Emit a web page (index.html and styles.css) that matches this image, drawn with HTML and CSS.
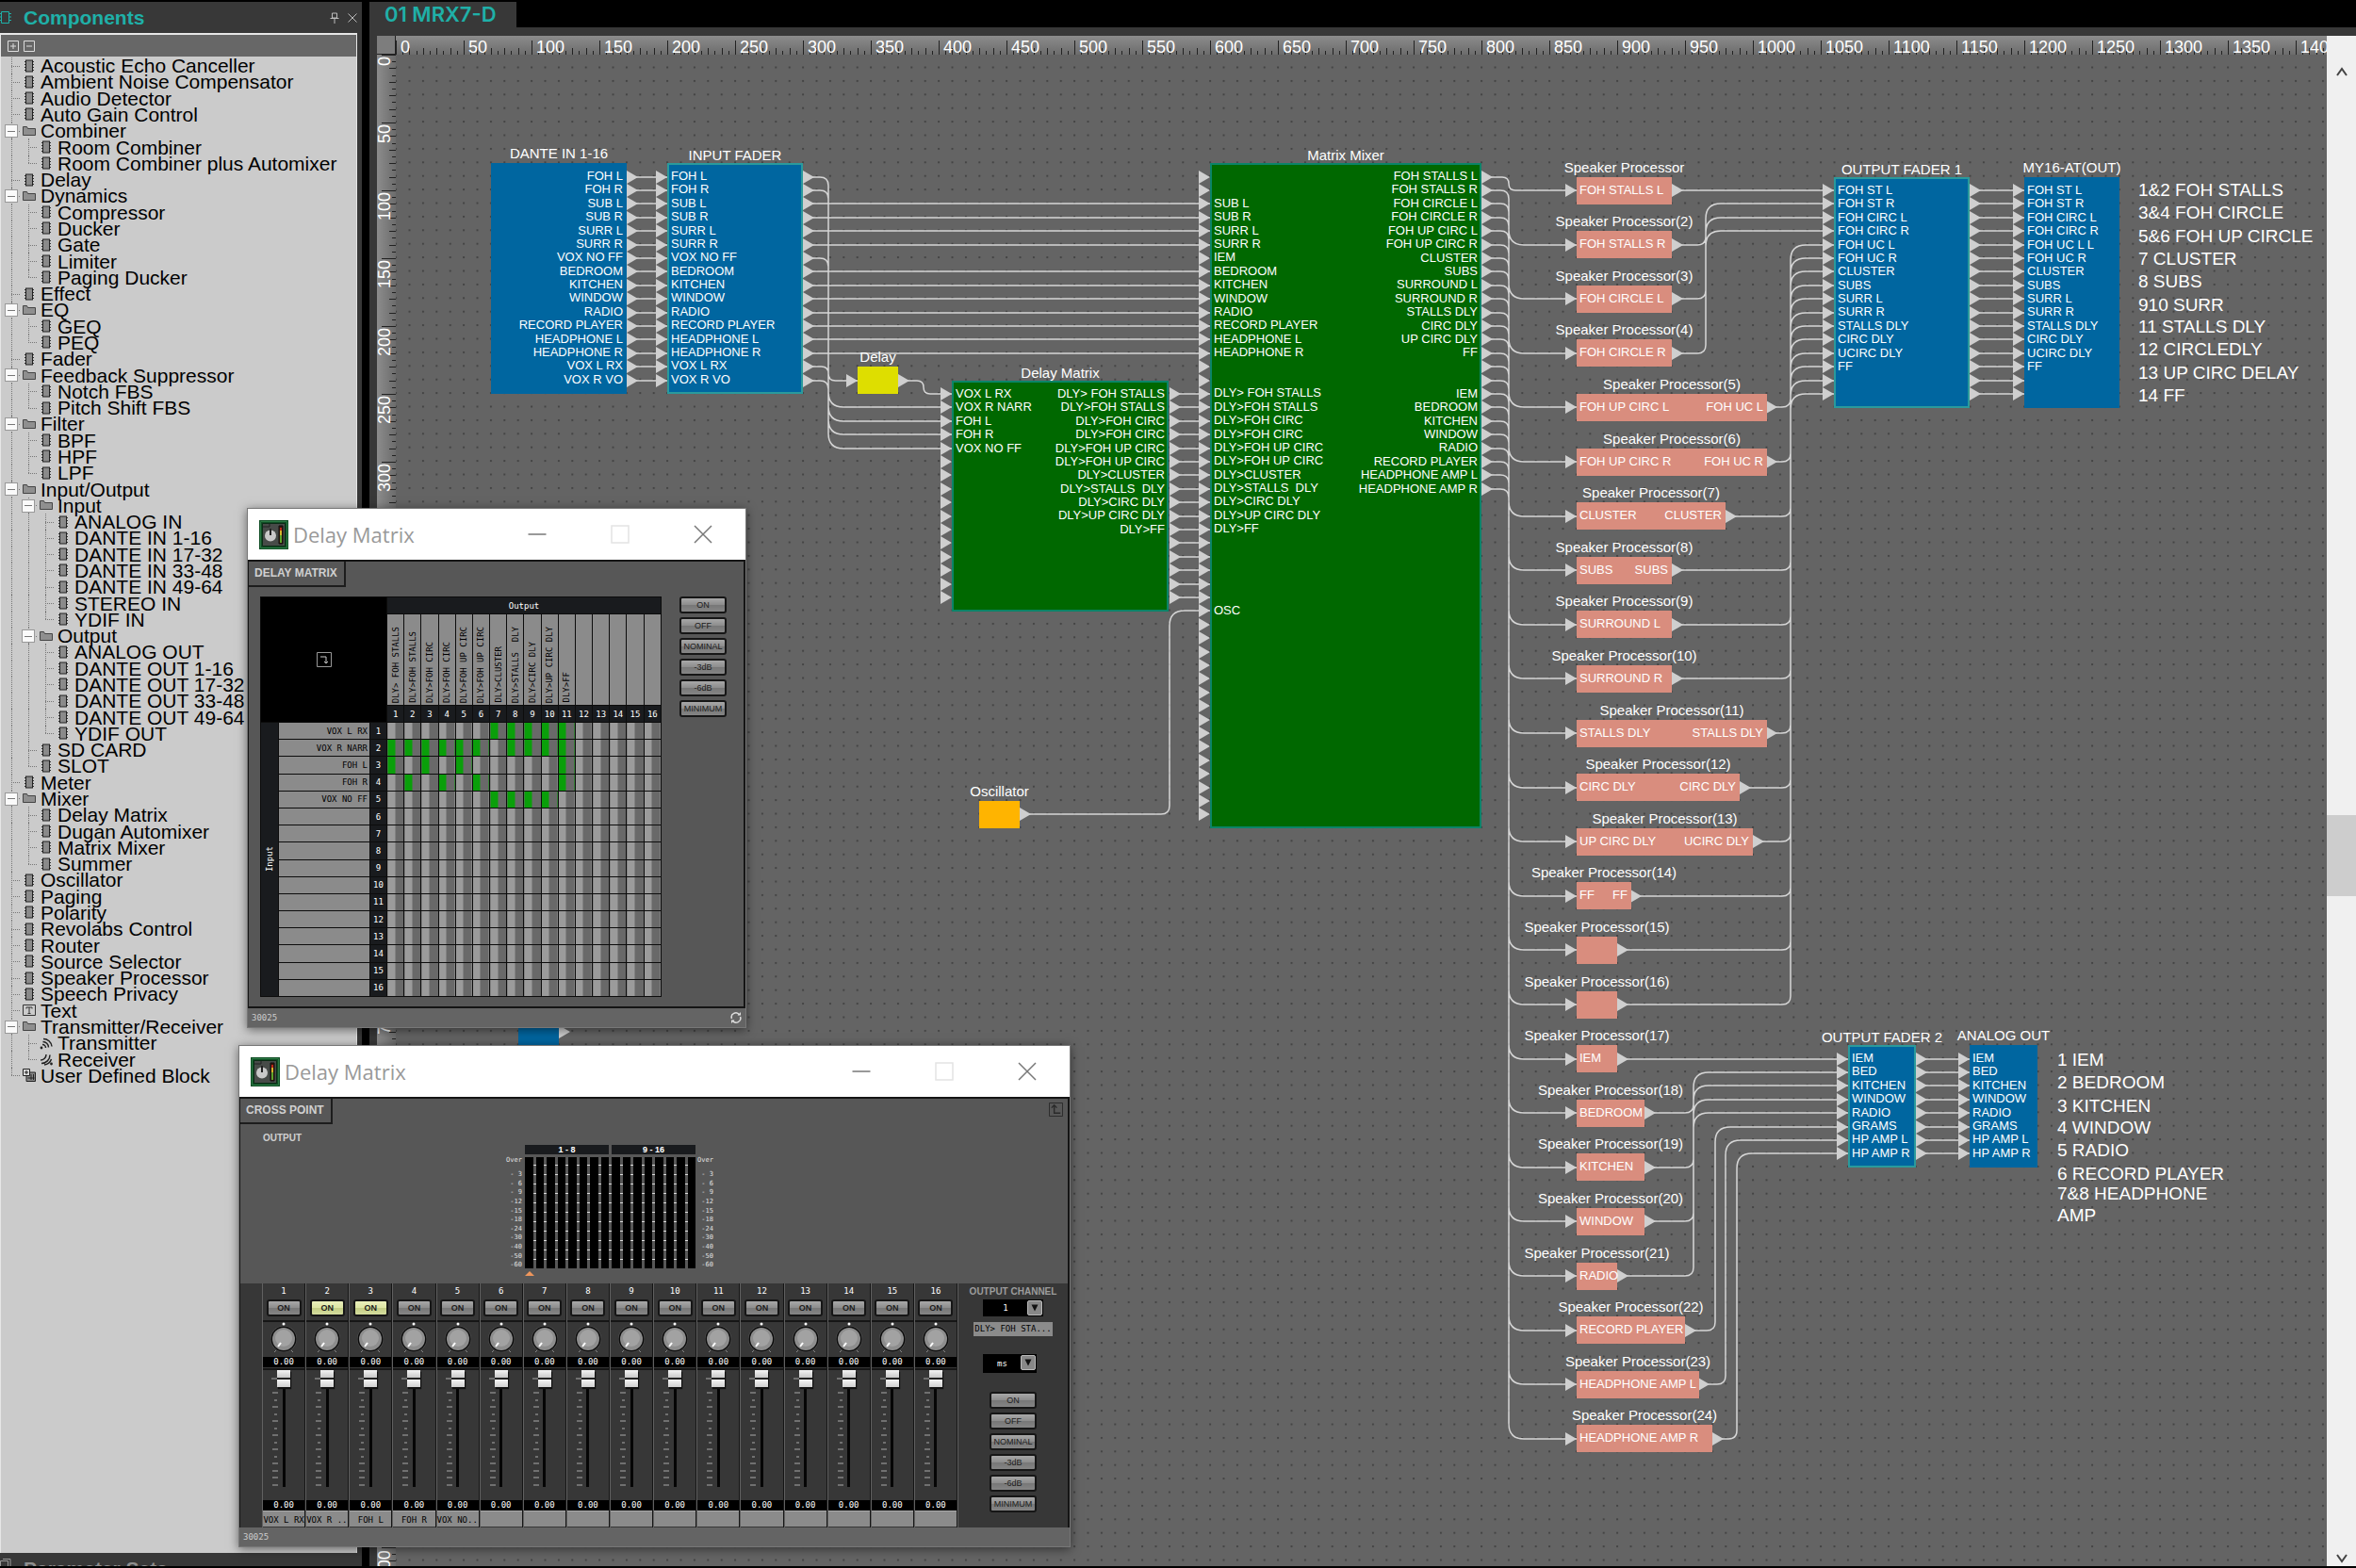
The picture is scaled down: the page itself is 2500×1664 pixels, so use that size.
FILE: index.html
```html
<!DOCTYPE html>
<html lang="en">

<head>
	<meta charset="UTF-8">
	<meta name="viewport" content="width=device-width, initial-scale=1.0">
	<title>01 MRX7-D</title>
	<link rel="stylesheet" href="styles.css">
</head>

<body>
	<!-- shared icons -->
	<svg class="defs" aria-hidden="true">
		<symbol id="i-chip" viewBox="0 0 14 14">
			<path d="M2 2.5h10M2 5.5h10M2 8.5h10M2 11.5h10" stroke="#333" />
			<rect x="3.5" y="1" width="7" height="12" fill="#8a8a8a" stroke="#222" />
		</symbol>
		<symbol id="i-folder" viewBox="0 0 14 14">
			<path d="M.5 11.5v-9h4l1 2h8v7z" fill="#8f8f8f" stroke="#444" />
		</symbol>
		<symbol id="i-text" viewBox="0 0 14 14">
			<path d="M.5 1.5h13v11H.5z" fill="none" stroke="#333" />
			<path d="M4 5.5V4h6v1.5M7 4v6M5.5 10.5h3" fill="none" stroke="#333" />
		</symbol>
		<symbol id="i-send" viewBox="0 0 14 14">
			<circle cx="2" cy="12" r="1.4" fill="#222" />
			<path d="M3 8.5a3.5 3.5 0 0 1 3.5 3.5M3.5 5.5a6 6 0 0 1 6 6M4 2.5a9 9 0 0 1 9 8" fill="none" stroke="#222" stroke-width="1.5" />
		</symbol>
		<symbol id="i-receive" viewBox="0 0 14 14">
			<circle cx="12.5" cy="12" r="1.4" fill="#222" />
			<path d="M2 11.5a9 9 0 0 0 9-9M1 8a6 6 0 0 0 6-6M5 13a9 9 0 0 0 7.5-6" fill="none" stroke="#222" stroke-width="1.5" />
		</symbol>
		<symbol id="i-user" viewBox="0 0 14 14">
			<path d="M4 4h9.5v9.5H4z" fill="#888" stroke="#222" />
			<path d="M.5.5h7v7h-7z" fill="#ddd" stroke="#222" />
			<path d="M2 4h4M4 2v4M9 6v6M11.5 6v6M5.5 10h7" stroke="#222" />
		</symbol>
		<symbol id="i-app" viewBox="0 0 31 31">
			<path d="M0 0h31v31H0z" fill="#0f4d24" />
			<path d="M1.5 1.5h28v28h-28z" fill="none" stroke="#2d7a45" />
			<path d="M3.5 3.5h24v24h-24z" fill="#474b48" stroke="#0b2b15" />
			<path d="M4 7h7V4" fill="none" stroke="#222" />
			<circle cx="12" cy="16.5" r="6" fill="#c9c9c9" />
			<path d="M12 9v7" stroke="#222" stroke-width="2" />
			<path d="M21 6h4v19h-4z" fill="#3b1508" stroke="#111" />
			<path d="M22 13h2v11h-2z" fill="#5da52c" />
			<path d="M22 11h2v5h-2z" fill="#d5b52b" />
			<path d="M22 8h2v3h-2z" fill="#bb2a1c" />
		</symbol>
		<symbol id="i-min" viewBox="0 0 20 20">
			<path d="M.5 10h19" stroke="#777" stroke-width="1.5" />
		</symbol>
		<symbol id="i-max" viewBox="0 0 20 20">
			<path d="M1 1h18v18H1z" fill="none" stroke="#e4e4e4" stroke-width="1.5" />
		</symbol>
		<symbol id="i-close" viewBox="0 0 20 20">
			<path d="M1 1l18 18M19 1L1 19" stroke="#777" stroke-width="1.5" />
		</symbol>
	</svg>

	<div class="app">
		<aside class="sidebar">
			<section class="panel">
				<header class="panel-head">
					<svg class="head-icon" viewBox="0 0 12 14"><path d="M0 2.5h12M0 6h12M0 9.5h12" stroke="#1fb0a8" /><path d="M1.5.5h8v12h-8z" fill="#383838" stroke="#1fb0a8" /></svg>
					<h1>Components</h1>
					<button class="icon-btn" aria-label="Pin"><svg viewBox="0 0 10 12"><path d="M2.5 1h5v5h-5zM.5 6.5h9M5 7v5" fill="none" stroke="#bbb" /></svg></button>
					<button class="icon-btn" aria-label="Close"><svg viewBox="0 0 10 10"><path d="M.5.5l9 9M9.5.5l-9 9" stroke="#bbb" /></svg></button>
				</header>
				<div class="tree-box">
					<div class="tree-tools">
						<button aria-label="Expand all"><svg viewBox="0 0 12 12"><path d="M.5.5h11v11H.5zM3 6h6M6 3v6" fill="none" stroke="#ddd" /></svg></button>
						<button aria-label="Collapse all"><svg viewBox="0 0 12 12"><path d="M.5.5h11v11H.5zM3 6h6" fill="none" stroke="#ddd" /></svg></button>
					</div>
					<ul class="tree" id="tree"></ul>
				</div>
			</section>
			<section class="panel-closed">
				<svg class="head-icon" viewBox="0 0 12 14"><path d="M.5 2.5h8v10h-8zM3 .5h8v10" fill="none" stroke="#999" /></svg>
				<h2>Parameter Sets</h2>
			</section>
		</aside>

		<main class="editor">
			<nav class="tabs"><a href="#">01 MRX7-D</a></nav>
			<div class="corner"></div>
			<svg class="ruler ruler-x" id="rulerX"></svg>
			<svg class="ruler ruler-y" id="rulerY"></svg>
			<div class="canvas" id="canvas">
				<svg class="layer">
					<defs>
						<pattern id="dots" width="10" height="10" patternUnits="userSpaceOnUse" patternTransform="translate(2 1) scale(1.44)">
							<path d="M8 8h1.4v1.4H8z" fill="#444" />
						</pattern>
					</defs>
					<rect width="100%" height="100%" fill="url(#dots)" />
				</svg>
				<svg class="layer" id="wires"></svg>
			</div>
			<div class="scrollbar">
				<svg viewBox="0 0 12 10"><path d="M1 9l5-7 5 7" fill="none" stroke="#444" stroke-width="2" /></svg>
				<div class="thumb"></div>
				<svg viewBox="0 0 12 10"><path d="M1 1l5 7 5-7" fill="none" stroke="#444" stroke-width="2" /></svg>
			</div>
		</main>
	</div>

	<section class="window matrix-window">
		<header class="titlebar">
			<svg class="app-icon"><use href="#i-app" /></svg>
			<h2>Delay Matrix</h2>
			<button aria-label="Minimize"><svg><use href="#i-min" /></svg></button>
			<button aria-label="Maximize"><svg><use href="#i-max" /></svg></button>
			<button aria-label="Close"><svg><use href="#i-close" /></svg></button>
		</header>
		<div class="window-body">
			<h3 class="sheet-tab">DELAY MATRIX</h3>
			<div class="matrix-row">
				<table class="matrix" id="matrix">
					<colgroup>
						<col class="col-side">
						<col class="col-name">
						<col class="col-num">
						<col span="16">
					</colgroup>
				</table>
				<div class="presets">
					<button>ON</button>
					<button>OFF</button>
					<button>NOMINAL</button>
					<button>-3dB</button>
					<button>-6dB</button>
					<button>MINIMUM</button>
				</div>
			</div>
		</div>
		<footer class="statusbar">
			<span>30025</span>
			<svg viewBox="0 0 12 12"><path d="M1.5 7a4.5 4.5 0 0 1 8-4M10.5 5a4.5 4.5 0 0 1-8 4" fill="none" stroke="#ddd" stroke-width="1.5" /><path d="M7.5 3.5h3.5V0zM4.5 8.5H1V12z" fill="#ddd" /></svg>
		</footer>
	</section>

	<section class="window cross-window">
		<header class="titlebar">
			<svg class="app-icon"><use href="#i-app" /></svg>
			<h2>Delay Matrix</h2>
			<button aria-label="Minimize"><svg><use href="#i-min" /></svg></button>
			<button aria-label="Maximize"><svg><use href="#i-max" /></svg></button>
			<button aria-label="Close"><svg><use href="#i-close" /></svg></button>
		</header>
		<div class="window-body">
			<div class="cross-top">
				<h3 class="sheet-tab">CROSS POINT</h3>
				<button class="back" aria-label="Back"><svg viewBox="0 0 16 16"><path d="M.5.5h15v15H.5z" fill="none" stroke="#2a2a2a" /><path d="M6 4v8h7M3 6l3-3 3 3" fill="none" stroke="#2a2a2a" stroke-width="1.5" /></svg></button>
			</div>
			<div class="meter-area">
				<span class="meter-title">OUTPUT</span>
				<ul class="scale" id="scaleL"></ul>
				<div class="meters">
					<div class="banks"><span>1 - 8</span><span>9 - 16</span></div>
					<div class="bars" id="bars"></div>
					<i class="marker"></i>
				</div>
				<ul class="scale" id="scaleR"></ul>
			</div>
			<div class="mixer">
				<div class="strips" id="strips"></div>
				<div class="master">
					<label class="master-title" for="channel">OUTPUT CHANNEL</label>
					<div class="drop">
						<select id="channel"><option>1</option></select>
						<svg viewBox="0 0 16 16"><path d="M4 4h8l-4 8z" fill="#111" /></svg>
					</div>
					<span class="master-name">DLY&gt; FOH STA...</span>
					<div class="drop drop-unit">
						<select aria-label="Unit"><option>ms</option></select>
						<svg viewBox="0 0 16 16"><path d="M4 4h8l-4 8z" fill="#111" /></svg>
					</div>
					<div class="presets">
						<button>ON</button>
						<button>OFF</button>
						<button>NOMINAL</button>
						<button>-3dB</button>
						<button>-6dB</button>
						<button>MINIMUM</button>
					</div>
				</div>
			</div>
		</div>
		<footer class="statusbar">
			<span>30025</span>
		</footer>
	</section>

	<script src="script.js"></script>
</body>

</html>
```
FILE: styles.css
```css
* {
	margin: 0;
	padding: 0;
	box-sizing: border-box;
}

body {
	height: 100vh;
	overflow: hidden;
	background: #000;
	color: #fff;
	font-family: "Liberation Sans", Arial, sans-serif;
}

ul {
	list-style: none;
}

button {
	border: 0;
	background: none;
	font-family: inherit;
}

svg {
	display: block;
}

.defs {
	display: none;
}

/* page frame */
.app {
	display: grid;
	grid-template-columns: 384px 1fr;
	column-gap: 8px;
	height: 100vh;
	padding: 2px 0;
}

.sidebar {
	display: flex;
	flex-direction: column;
	min-height: 0;
	background: #383838;
}

.panel {
	flex: 1;
	display: flex;
	flex-direction: column;
	min-height: 0;
	padding-right: 5px;
}

.panel-head {
	display: flex;
	align-items: center;
	height: 33px;
	flex: none;
}

.head-icon {
	width: 12px;
	height: 14px;
	margin-right: 13px;
}

.panel-head h1 {
	flex: 1;
	color: #1fb0a8;
	font-size: 21px;
	line-height: 28px;
}

.icon-btn {
	width: 10px;
	height: 12px;
	margin-left: 9px;
}

.tree-box {
	flex: 1;
	min-height: 0;
	background: #cbcbcb;
	border: 1px solid #e6e6e6;
	border-width: 2px 1px 0 1px;
}

.tree-tools {
	display: flex;
	align-items: center;
	gap: 5px;
	height: 23px;
	padding-left: 7px;
	background: #676767;
}

.tree-tools button {
	width: 12px;
	height: 12px;
}

.tree {
	display: grid;
	grid-auto-rows: 1fr;
	height: 1089px;
	margin-top: 1px;
	padding-left: 2px;
	color: #000;
	font-size: 21px;
	line-height: 17px;
}

.tree li {
	display: flex;
	align-items: center;
	min-height: 0;
	white-space: nowrap;
}

.guide {
	position: relative;
	flex: none;
	align-self: stretch;
	width: 18px;
}

/* vertical and horizontal dotted guides */
.guide.line::before,
.guide.end::before {
	content: "";
	position: absolute;
	left: 9px;
	top: 0;
	bottom: 0;
	border-left: 1px dotted #777;
}

.guide.end::before {
	bottom: 50%;
}

.guide.tick::after {
	content: "";
	position: absolute;
	left: 9px;
	right: 0;
	top: 50%;
	border-top: 1px dotted #777;
}

.guide button {
	position: absolute;
	z-index: 1;
	left: 2px;
	top: 2px;
	width: 14px;
	height: 14px;
	border: 1px solid #999;
	background: linear-gradient(#777, #777) center / 8px 1px no-repeat #fafafa;
}

.tree li svg {
	flex: none;
	width: 14px;
	height: 14px;
	margin: 0 5px 0 3px;
}

.panel-closed {
	display: flex;
	height: 14px;
	padding-top: 6px;
	overflow: hidden;
	color: #8f8f8f;
}

.panel-closed h2 {
	font-size: 21px;
	line-height: 21px;
}

/* editor */
.editor {
	display: grid;
	grid-template: 27px 29px 1fr / 28px 1fr 31px;
	min-width: 0;
	min-height: 0;
	background: #383838;
}

.tabs {
	grid-column: 1 / -1;
	background: #000;
}

.tabs a {
	display: block;
	width: 156px;
	height: 27px;
	padding-left: 16px;
	background: #383838;
	color: #1fb0a8;
	font-family: Inter, "Open Sans", sans-serif;
	font-size: 22px;
	line-height: 27px;
	font-weight: 600;
	text-decoration: none;
}

.corner {
	width: 20px;
	height: 20px;
	margin: 9px 0 0 8px;
	background: #7d7d7d;
	border-right: 1px solid #222;
	border-bottom: 1px solid #222;
}

.ruler {
	overflow: hidden;
	fill: #fff;
	font-size: 18px;
}

.ruler path {
	stroke: #222;
	fill: none;
}

.ruler-x {
	width: 100%;
	height: 20px;
	margin-top: 9px;
	background: linear-gradient(#8c8c8c, #6c6c6c);
}

.ruler-y {
	grid-row: 3;
	width: 20px;
	height: 100%;
	margin-left: 8px;
	background: linear-gradient(to right, #8c8c8c, #6c6c6c);
}

.canvas {
	position: relative;
	grid-row: 3;
	grid-column: 2;
	overflow: hidden;
	background: #646464;
}

.layer {
	position: absolute;
	inset: 0;
	width: 100%;
	height: 100%;
}

.wire {
	fill: none;
	stroke: #d6d6d6;
	stroke-width: 1.5;
}

.port {
	fill: #cfcfcf;
}

.block {
	position: absolute;
	display: flex;
	justify-content: space-between;
	padding: 7px 4px 0 3px;
	background: #0066a0;
	font-size: 13px;
	line-height: 14px;
}

.block.framed {
	border: 2px solid #2a9a9c;
	padding: 5px 2px 0 2px;
}

.block.green {
	background: #006800;
	border: 2px solid #0b8468;
	padding: 5px 2px 0 2px;
}

.block.yellow {
	background: #dede00;
}

.block.orange {
	background: #ffb400;
}

.block.speaker {
	background: #d98d7e;
}

.block h4 {
	position: absolute;
	bottom: 100%;
	left: -100px;
	right: -100px;
	font-size: 15px;
	line-height: 20px;
	font-weight: 400;
	text-align: center;
}

.block ul {
	display: grid;
	grid-auto-rows: 1fr;
	min-width: 0;
}

.block li {
	white-space: pre;
}

.block .outs {
	text-align: right;
}

.note {
	position: absolute;
	font-size: 19px;
	line-height: 24px;
	white-space: nowrap;
}

.scrollbar {
	grid-row: 2 / 4;
	grid-column: 3;
	display: flex;
	flex-direction: column;
	align-items: center;
	margin-top: 9px;
	padding: 33px 0 3px 0;
	background: #f0f0f0;
}

.scrollbar svg {
	width: 12px;
	height: 10px;
}

.scrollbar .thumb {
	flex: none;
	width: 100%;
	height: 86px;
	margin: 784px 0 auto;
	background: #cdcdcd;
}

/* floating windows */
.window {
	position: absolute;
	display: flex;
	flex-direction: column;
	background: #646464;
	border: 1px solid #777;
	box-shadow: 0 2px 10px rgba(0, 0, 0, 0.5);
}

.matrix-window {
	left: 262px;
	top: 539px;
	width: 530px;
	height: 552px;
}

.cross-window {
	left: 253px;
	top: 1109px;
	width: 883px;
	height: 533px;
}

.titlebar {
	display: flex;
	align-items: center;
	flex: none;
	height: 54px;
	padding: 0 35px 0 12px;
	background: #fff;
}

.app-icon {
	width: 31px;
	height: 31px;
}

.titlebar h2 {
	flex: 1;
	margin-left: 5px;
	color: #999;
	font-family: "Open Sans", "Noto Sans", sans-serif;
	font-size: 22px;
	line-height: 30px;
	font-weight: 400;
}

.titlebar button {
	width: 20px;
	height: 20px;
	margin-left: 68px;
}

.titlebar button svg {
	width: 20px;
	height: 20px;
}

.window-body {
	flex: 1;
	min-height: 0;
	background: #575757;
	border: 1px solid #151515;
	border-width: 2px 2px 2px 1px;
}

.sheet-tab {
	width: max-content;
	padding: 0 7px 0 6px;
	border: 2px solid #1d1d1d;
	border-width: 0 2px 2px 0;
	color: #d0d0d0;
	font-size: 12px;
	line-height: 25px;
	font-weight: 700;
}

.statusbar {
	display: flex;
	justify-content: space-between;
	align-items: center;
	flex: none;
	height: 20px;
	padding: 0 4px;
	color: #ccc;
	font-family: "DejaVu Sans Mono", monospace;
	font-size: 9px;
}

.statusbar svg {
	width: 12px;
	height: 12px;
}

/* delay matrix */
.matrix-row {
	display: flex;
	gap: 19px;
	padding: 10px 0 0 12px;
}

.matrix {
	width: 426px;
	height: 425px;
	table-layout: fixed;
	border-collapse: collapse;
	background: #000;
	font-family: "DejaVu Sans Mono", monospace;
	font-size: 9px;
	line-height: 12px;
}

.col-side {
	width: 19px;
}

.col-name {
	width: 97px;
}

.col-num {
	width: 18px;
}

.matrix th,
.matrix td {
	border: 1px solid #0c0c0c;
	font-weight: 400;
}

.matrix .dark {
	background: #191b1e;
	color: #fff;
}

.matrix .label {
	background: #8b8b8b;
	color: #000;
	text-align: right;
	padding-right: 2px;
	white-space: pre;
}

.matrix .top {
	height: 18px;
}

.matrix .names {
	height: 97px;
}

.matrix .rot {
	padding: 0 0 2px 0;
	text-align: left;
	vertical-align: bottom;
}

.matrix .rot span,
.side-text {
	display: block;
	margin: auto;
	writing-mode: vertical-rl;
	rotate: 180deg;
	white-space: pre;
}

.matrix .cell {
	background: linear-gradient(to right, #9b9b9b 45%, #696969 45%);
}

.matrix .cell.on {
	background: linear-gradient(to right, #0a9f0a 45%, #696969 45%);
}

.corner-icon {
	width: 16px;
	height: 16px;
	margin: auto;
}

.presets {
	display: flex;
	flex-direction: column;
	gap: 4px;
}

.presets button,
.strip button {
	height: 18px;
	border: 2px solid #161616;
	border-radius: 3px;
	background: linear-gradient(#a8a8a8, #8c8c8c 50%, #777 50%, #858585);
	color: #1c1c1c;
	font-size: 9px;
	line-height: 14px;
	white-space: nowrap;
}

.presets button {
	width: 50px;
}

/* cross point */
.cross-top {
	display: flex;
	justify-content: space-between;
	height: 27px;
}

.back {
	width: 15px;
	height: 15px;
	margin: 4px 5px 0 0;
}

.meter-area {
	display: flex;
	height: 169px;
	padding: 9px 0 0 24px;
}

.meter-title {
	flex: none;
	width: 254px;
	color: #d0d0d0;
	font-size: 10px;
	line-height: 12px;
	font-weight: 700;
}

.scale {
	display: grid;
	grid-template-rows: 15px;
	grid-auto-rows: 1fr;
	width: 16px;
	height: 121px;
	margin: 25px 4px 0;
	color: #e0e0e0;
	font-family: "DejaVu Sans Mono", monospace;
	font-size: 7px;
	text-align: right;
	white-space: pre;
}

#scaleR {
	margin-left: 2px;
}

.meters {
	width: 181px;
	margin-top: 13px;
}

.banks {
	display: flex;
	gap: 3px;
	margin-bottom: 3px;
	font-size: 9px;
	line-height: 10px;
	font-weight: 700;
	text-align: center;
}

.banks span {
	flex: 1;
	background: #191b1e;
}

.bars {
	display: grid;
	grid-auto-flow: column;
	grid-auto-columns: 1fr;
	gap: 3px;
	height: 118px;
	/* scale marks showing between the bars */
	background: repeating-linear-gradient(transparent 0 8px, #ddd 8px 9px, transparent 9px 10px);
}

.bars i {
	background: #000;
}

.marker {
	display: block;
	width: 0;
	margin-top: 3px;
	border: 5px solid transparent;
	border-top: 0;
	border-bottom-color: #ee965c;
}

.mixer {
	display: flex;
	height: 259px;
	background: #373737;
}

.strips {
	flex: none;
	display: grid;
	grid-template-columns: repeat(16, 1fr);
	width: 761px;
	padding-left: 23px;
}

.strip {
	display: flex;
	flex-direction: column;
	align-items: center;
	min-width: 0;
	border-left: 1px solid #606060;
	border-right: 1px solid #151515;
	font-family: "DejaVu Sans Mono", monospace;
	font-size: 9px;
	line-height: 12px;
}

.strip .num {
	margin: 2px 0 3px;
}

.strip button {
	width: 37px;
	font-family: "Liberation Sans", Arial, sans-serif;
	font-weight: 700;
}

.strip button.lit {
	background: linear-gradient(#eaf0bb, #dde5a4 50%, #c3cd84 50%, #d5dd9f);
}

.strip .knob {
	position: relative;
	width: 100%;
	height: 39px;
	margin-top: 4px;
	border-top: 2px solid #161616;
}

.knob svg {
	width: 34px;
	height: 36px;
	margin: auto;
}

.knob input {
	position: absolute;
	inset: 0;
	width: 100%;
	opacity: 0;
}

.readout {
	width: 100%;
	background: #000;
	text-align: center;
	line-height: 11px;
}

.fader {
	position: relative;
	width: 100%;
	height: 140px;
	margin-top: 1px;
	border-top: 2px solid #161616;
}

.fader svg {
	width: 100%;
	height: 135px;
}

.fader input {
	position: absolute;
	left: 15px;
	top: 0;
	width: 14px;
	height: 124px;
	appearance: none;
	writing-mode: vertical-lr;
	direction: rtl;
	background: linear-gradient(#050505, #050505) center / 3px 100% no-repeat;
}

.fader input::-webkit-slider-thumb {
	appearance: none;
	width: 14px;
	height: 18px;
	background: linear-gradient(#f4f4f4, #c9c9c9 44%, #222 44% 56%, #f4f4f4 56%, #d0d0d0);
	box-shadow: 1px 2px 1px #111;
}

.strip .name {
	width: 100%;
	height: 17px;
	padding-top: 3px;
	background: #8b8b8b;
	border-top: 1px solid #aaa;
	color: #000;
	text-align: center;
	white-space: pre;
}

.master {
	flex: 1;
	display: flex;
	flex-direction: column;
	align-items: center;
	border-left: 1px solid #606060;
	font-family: "DejaVu Sans Mono", monospace;
	font-size: 9px;
}

.master-title {
	margin: 3px 0 2px;
	color: #9c9c9c;
	font-family: "Liberation Sans", Arial, sans-serif;
	font-size: 10px;
	line-height: 12px;
	font-weight: 700;
}

.drop {
	position: relative;
	display: flex;
	width: 64px;
	height: 18px;
	background: #000;
}

.drop select {
	flex: 1;
	appearance: none;
	padding-right: 16px;
	border: 0;
	background: none;
	color: #fff;
	font-family: inherit;
	font-size: 9px;
	text-align: center;
	text-align-last: center;
}

.drop svg {
	position: absolute;
	right: 1px;
	top: 1px;
	width: 16px;
	height: 16px;
	border: 1px solid #bbb;
	border-radius: 2px;
	background: #888;
	pointer-events: none;
}

.drop-unit {
	width: 57px;
	height: 20px;
	margin-top: 19px;
	margin-right: 7px;
}

.master-name {
	margin-top: 6px;
	padding: 0 1px;
	background: #8b8b8b;
	color: #000;
	line-height: 15px;
	white-space: pre;
}

.master .presets {
	margin-top: 20px;
	font-family: "Liberation Sans", Arial, sans-serif;
}
```
FILE: script.js
```js
// one canvas unit in pixels
const SCALE = 1.44
const px = u => Math.round(u * SCALE)

// ---------- component tree: leading dots give the level ----------
const tree = `Acoustic Echo Canceller
Ambient Noise Compensator
Audio Detector
Auto Gain Control
+Combiner
.Room Combiner
.Room Combiner plus Automixer
Delay
+Dynamics
.Compressor
.Ducker
.Gate
.Limiter
.Paging Ducker
Effect
+EQ
.GEQ
.PEQ
Fader
+Feedback Suppressor
.Notch FBS
.Pitch Shift FBS
+Filter
.BPF
.HPF
.LPF
+Input/Output
.+Input
..ANALOG IN
..DANTE IN 1-16
..DANTE IN 17-32
..DANTE IN 33-48
..DANTE IN 49-64
..STEREO IN
..YDIF IN
.+Output
..ANALOG OUT
..DANTE OUT 1-16
..DANTE OUT 17-32
..DANTE OUT 33-48
..DANTE OUT 49-64
..YDIF OUT
.SD CARD
.SLOT
Meter
+Mixer
.Delay Matrix
.Dugan Automixer
.Matrix Mixer
.Summer
Oscillator
Paging
Polarity
Revolabs Control
Router
Source Selector
Speaker Processor
Speech Privacy
Text
+Transmitter/Receiver
.Transmitter
.Receiver
User Defined Block`.split("\n").map(line => {
	const [, dots, plus, name] = line.match(/^(\.*)(\+?)(.*)$/)
	return { level: dots.length, open: plus === "+", name }
})

const treeIcons = { "Text": "text", "Transmitter": "send", "Receiver": "receive", "User Defined Block": "user" }

// is there another row of this level below, before the branch closes?
function continues(index, level) {
	for (let i = index + 1; i < tree.length; i++) {
		if (tree[i].level < level) return false
		if (tree[i].level === level) return true
	}
	return false
}

document.querySelector("#tree").innerHTML = tree.map((item, index) => {
	let guides = ""
	for (let l = 0; l <= item.level; l++) {
		const more = continues(index, l)
		const own = l === item.level
		const cls = (more ? "line" : own ? "end" : "") + (own ? " tick" : "")
		const btn = own && item.open ? `<button aria-label="Collapse ${item.name}"></button>` : ""
		guides += `<span class="guide ${cls}">${btn}</span>`
	}
	const icon = item.open ? "folder" : treeIcons[item.name] || "chip"
	return `<li>${guides}<svg><use href="#i-${icon}"/></svg>${item.name}</li>`
}).join("")

// ---------- rulers ----------
function ruler(vertical) {
	let ticks = ""
	let labels = ""
	for (let u = 0; u <= 1450; u += 5) {
		const p = px(u) + 0.5
		const len = u % 50 === 0 ? 15 : u % 10 === 0 ? 7 : 4
		ticks += vertical ? `M20 ${p}h-${len}` : `M${p} 20v-${len}`
		if (u % 50 === 0) {
			const w = String(u).length * 10
			labels += vertical
				? `<text transform="translate(14 ${px(u) + w + 2}) rotate(-90)">${u}</text>`
				: `<text x="${px(u) + 5}" y="18">${u}</text>`
		}
	}
	return `<path d="${ticks}"/>${labels}`
}
document.querySelector("#rulerX").innerHTML = ruler(false)
document.querySelector("#rulerY").innerHTML = ruler(true)

// ---------- blocks (canvas units) ----------
const list = s => s.split("|")
const inputs = "FOH L|FOH R|SUB L|SUB R|SURR L|SURR R|VOX NO FF|BEDROOM|KITCHEN|WINDOW|RADIO|RECORD PLAYER|HEADPHONE L|HEADPHONE R|VOX L RX|VOX R VO"
const delays = "DLY> FOH STALLS|DLY>FOH STALLS|DLY>FOH CIRC|DLY>FOH CIRC|DLY>FOH UP CIRC|DLY>FOH UP CIRC|DLY>CLUSTER|DLY>STALLS  DLY|DLY>CIRC DLY|DLY>UP CIRC DLY|DLY>FF|||||"
const monitors = "IEM|BED|KITCHEN|WINDOW|RADIO|GRAMS|HP AMP L|HP AMP R"

const blocks = [
	{ title: "DANTE IN 1-16", cls: "", x: 70, y: 80, w: 100, h: 170, outs: list(inputs) },
	{ title: "INPUT FADER", cls: "framed", x: 200, y: 80, w: 100, h: 170, ins: list(inputs), outs: Array(16).fill("") },
	{ title: "Delay", cls: "yellow", x: 340, y: 230, w: 30, h: 20, ins: [""], outs: [""] },
	{ title: "Delay Matrix", cls: "green", x: 410, y: 240, w: 160, h: 170, ins: list("VOX L RX|VOX R NARR|FOH L|FOH R|VOX NO FF|||||||||||"), outs: list(delays) },
	{ title: "Matrix Mixer", cls: "green", x: 600, y: 80, w: 200, h: 490,
		ins: list("||SUB L|SUB R|SURR L|SURR R|IEM|BEDROOM|KITCHEN|WINDOW|RADIO|RECORD PLAYER|HEADPHONE L|HEADPHONE R|||" + delays + "|OSC|||||||||||||||"),
		outs: list("FOH STALLS L|FOH STALLS R|FOH CIRCLE L|FOH CIRCLE R|FOH UP CIRC L|FOH UP CIRC R|CLUSTER|SUBS|SURROUND L|SURROUND R|STALLS DLY|CIRC DLY|UP CIRC DLY|FF|||IEM|BEDROOM|KITCHEN|WINDOW|RADIO|RECORD PLAYER|HEADPHONE AMP L|HEADPHONE AMP R") },
	{ title: "Oscillator", cls: "orange", x: 430, y: 550, w: 30, h: 20, outs: [""] },
	{ title: "", cls: "", x: 90, y: 710, w: 30, h: 20, outs: [""] },
	{ title: "OUTPUT FADER 1", cls: "framed", x: 1060, y: 90, w: 100, h: 170, ins: list("FOH ST L|FOH ST R|FOH CIRC L|FOH CIRC R|FOH UC L|FOH UC R|CLUSTER|SUBS|SURR L|SURR R|STALLS DLY|CIRC DLY|UCIRC DLY|FF||"), outs: Array(16).fill("") },
	{ title: "MY16-AT(OUT)", cls: "", x: 1200, y: 90, w: 70, h: 170, ins: list("FOH ST L|FOH ST R|FOH CIRC L|FOH CIRC R|FOH UC L L|FOH UC R|CLUSTER|SUBS|SURR L|SURR R|STALLS DLY|CIRC DLY|UCIRC DLY|FF||") },
	{ title: "OUTPUT FADER 2", cls: "framed", x: 1070, y: 730, w: 50, h: 90, ins: list(monitors), outs: Array(8).fill("") },
	{ title: "ANALOG OUT", cls: "", x: 1160, y: 730, w: 50, h: 90, ins: list(monitors) }
]

// speaker processors: width, input name, output name
const speakers = [
	[70, "FOH STALLS L"], [70, "FOH STALLS R"], [70, "FOH CIRCLE L"], [70, "FOH CIRCLE R"],
	[140, "FOH UP CIRC L", "FOH UC L"], [140, "FOH UP CIRC R", "FOH UC R"],
	[110, "CLUSTER", "CLUSTER"], [70, "SUBS", "SUBS"], [70, "SURROUND L"], [70, "SURROUND R"],
	[140, "STALLS DLY", "STALLS DLY"], [120, "CIRC DLY", "CIRC DLY"], [130, "UP CIRC DLY", "UCIRC DLY"],
	[40, "FF", "FF"], [30, ""], [30, ""], [30, "IEM"], [50, "BEDROOM"], [50, "KITCHEN"], [50, "WINDOW"],
	[30, "RADIO"], [80, "RECORD PLAYER"], [90, "HEADPHONE AMP L"], [100, "HEADPHONE AMP R"]
]
speakers.forEach(([w, name, out], i) => {
	blocks.push({
		title: "Speaker Processor" + (i ? `(${i + 1})` : ""),
		cls: "speaker", x: 870, y: 90 + i * 40, w, h: 20, ins: [name], outs: [out || ""]
	})
})

const notes = [
	[1284, 99, "1&2 FOH STALLS"], [1284, 116, "3&4 FOH CIRCLE"], [1284, 133, "5&6 FOH UP CIRCLE"],
	[1284, 150, "7 CLUSTER"], [1284, 167, "8 SUBS"], [1284, 184, "910 SURR"], [1284, 200, "11 STALLS DLY"],
	[1284, 217, "12 CIRCLEDLY"], [1284, 234, "13 UP CIRC DELAY"], [1284, 251, "14 FF"],
	[1224, 740, "1 IEM"], [1224, 757, "2 BEDROOM"], [1224, 774, "3 KITCHEN"], [1224, 790, "4 WINDOW"],
	[1224, 807, "5 RADIO"], [1224, 824, "6 RECORD PLAYER"], [1224, 839, "7&8 HEADPHONE"], [1224, 855, "AMP"]
]

const esc = s => s.replace(/&/g, "&amp;").replace(/>/g, "&gt;")
const canvas = document.querySelector("#canvas")
let ports = ""
let html = ""

function portList(cls, names) {
	if (!names) return "<ul></ul>"
	return `<ul class="${cls}" style="height:${px(names.length * 10)}px">${names.map(n => `<li>${esc(n)}</li>`).join("")}</ul>`
}

for (const b of blocks) {
	(b.ins || []).forEach((n, i) => {
		const y = px(b.y + 10 + i * 10), x = px(b.x)
		ports += `M${x - 12} ${y - 7}v14l12 -7z`
	});
	(b.outs || []).forEach((n, i) => {
		const y = px(b.y + 10 + i * 10), x = px(b.x + b.w)
		ports += `M${x} ${y - 7}v14l12 -7z`
	})
	html += `<section class="block ${b.cls}" style="left:${px(b.x)}px;top:${px(b.y)}px;width:${px(b.w)}px;height:${px(b.h)}px">
		${b.title ? `<h4>${b.title}</h4>` : ""}${portList("ins", b.ins)}${portList("outs", b.outs)}</section>`
}
for (const [x, y, text] of notes) {
	html += `<p class="note" style="left:${px(x)}px;top:${px(y) - 11}px">${esc(text)}</p>`
}
canvas.insertAdjacentHTML("beforeend", html)

// ---------- wires ----------
let wires = ""

function straight(x1, x2, y) {
	wires += `M${px(x1)} ${px(y)}H${px(x2)}`
}

// out of a port, along a shared bus at xb, into another port
function bus(x1, y1, xb, x2, y2) {
	const dir = y2 > y1 ? 1 : -1
	const a = px(y1), b = px(y2), x = px(xb)
	const r1 = Math.min(9, Math.abs(b - a) / 2)
	const r2 = Math.min(16, Math.abs(b - a) - r1)
	wires += `M${px(x1)} ${a}H${x - r1}Q${x} ${a} ${x} ${a + r1 * dir}V${b - r2 * dir}Q${x} ${b} ${x + r2} ${b}H${px(x2)}`
}

for (let y = 90; y <= 240; y += 10) straight(170, 200, y)
for (const y of [110, 120, 130, 140, 160, 170, 180, 190, 200, 210, 220]) straight(300, 600, y)
bus(300, 230, 319, 340, 240)
bus(300, 240, 319, 410, 260)
bus(300, 90, 319, 410, 270)
bus(300, 100, 319, 410, 280)
bus(300, 150, 319, 410, 290)
bus(370, 240, 389, 410, 250)
bus(460, 560, 570, 600, 410)
for (let y = 250; y <= 400; y += 10) straight(570, 600, y)
for (let y = 100; y <= 250; y += 10) straight(1160, 1200, y)
for (let y = 740; y <= 810; y += 10) straight(1120, 1160, y)

const busAt = i => i < 4 ? 965 : i < 16 ? 1028 : i < 21 ? 956 : i === 21 ? 972 : i === 22 ? 980 : 988
speakers.forEach(([w], i) => {
	const y = 100 + i * 40
	bus(800, 90 + i * 10, 820, 870, y)
	if (i === 0) straight(940, 1060, y)
	else if (i === 16) straight(900, 1070, y)
	else if (i < 16) bus(870 + w, y, busAt(i), 1060, 100 + i * 10)
	else bus(870 + w, y, busAt(i), 1070, 740 + (i - 16) * 10)
})
document.querySelector("#wires").innerHTML = `<path class="wire" d="${wires}"/><path class="port" d="${ports}"/>`

// ---------- delay matrix ----------
const outNames = list(delays)
const inNames = list("VOX L RX|VOX R NARR|FOH L|FOH R|VOX NO FF|||||||||||")
const active = [[7, 8, 9, 10, 11], [1, 2, 3, 4, 5, 6, 8, 9, 10, 11], [1, 3, 5, 11], [2, 4, 6, 11], [7, 8, 9, 10]]
let rows = `<thead><tr class="top"><td colspan="3" rowspan="3"><svg class="corner-icon" viewBox="0 0 16 16"><path d="M.5.5h15v15H.5z" fill="none" stroke="#999"/><path d="M4 5h6v7M8 10l2 2 2-2" fill="none" stroke="#ccc"/></svg></td>
	<th class="dark" colspan="16">Output</th></tr>
	<tr class="names">${outNames.map(n => `<th class="label rot"><span>${esc(n)}</span></th>`).join("")}</tr>
	<tr class="top">${outNames.map((n, i) => `<th class="dark">${i + 1}</th>`).join("")}</tr></thead><tbody>`
inNames.forEach((name, r) => {
	rows += "<tr>"
	if (r === 0) rows += `<th class="dark" rowspan="16"><span class="side-text">Input</span></th>`
	rows += `<th class="label">${name}</th><th class="dark">${r + 1}</th>`
	for (let c = 1; c <= 16; c++) {
		rows += `<td class="cell${(active[r] || []).includes(c) ? " on" : ""}"></td>`
	}
	rows += "</tr>"
})
document.querySelector("#matrix").insertAdjacentHTML("beforeend", rows + "</tbody>")

// ---------- cross point ----------
const scale = ["Over", "- 3", "- 6", "- 9", "-12", "-15", "-18", "-24", "-30", "-40", "-50", "-60"]
for (const id of ["#scaleL", "#scaleR"]) {
	document.querySelector(id).innerHTML = scale.map(s => `<li>${s}</li>`).join("")
}
document.querySelector("#bars").innerHTML = "<i></i>".repeat(16)

let marks = "M9 9h8"
for (let i = 0; i < 14; i++) marks += `M${i % 2 && i < 10 ? 12 : 10} ${24 + Math.round(i * 7.5)}h${i % 2 && i < 10 ? 3 : 6}`

const names = ["VOX L RX", "VOX R ...", "FOH L", "FOH R", "VOX NO..."]
let strips = ""
for (let i = 1; i <= 16; i++) {
	strips += `<div class="strip">
		<span class="num">${i}</span>
		<button${i === 2 || i === 3 ? ' class="lit"' : ""}>ON</button>
		<div class="knob">
			<svg viewBox="0 0 34 36"><circle cx="17" cy="2" r="1.5" fill="#fff"/><circle cx="17" cy="18" r="14" fill="#555"/><circle cx="17" cy="18" r="13.5" fill="#0c0c0c"/>
			<circle cx="17" cy="18" r="12" fill="#8d8d8d"/><circle cx="17" cy="17" r="9" fill="#a2a2a2"/><path d="M14 22l-3 4" stroke="#fff" stroke-width="2"/>
			<path d="M7 32l2-2M27 32l-2-2" stroke="#888"/></svg>
			<input type="range" aria-label="Delay ${i}" value="0">
		</div>
		<output class="readout">0.00</output>
		<div class="fader">
			<svg><path d="${marks}" stroke="#aaa"/></svg>
			<input type="range" aria-label="Level ${i}" value="100">
		</div>
		<output class="readout">0.00</output>
		<span class="name">${names[i - 1] || ""}</span>
	</div>`
}
document.querySelector("#strips").innerHTML = strips
```
